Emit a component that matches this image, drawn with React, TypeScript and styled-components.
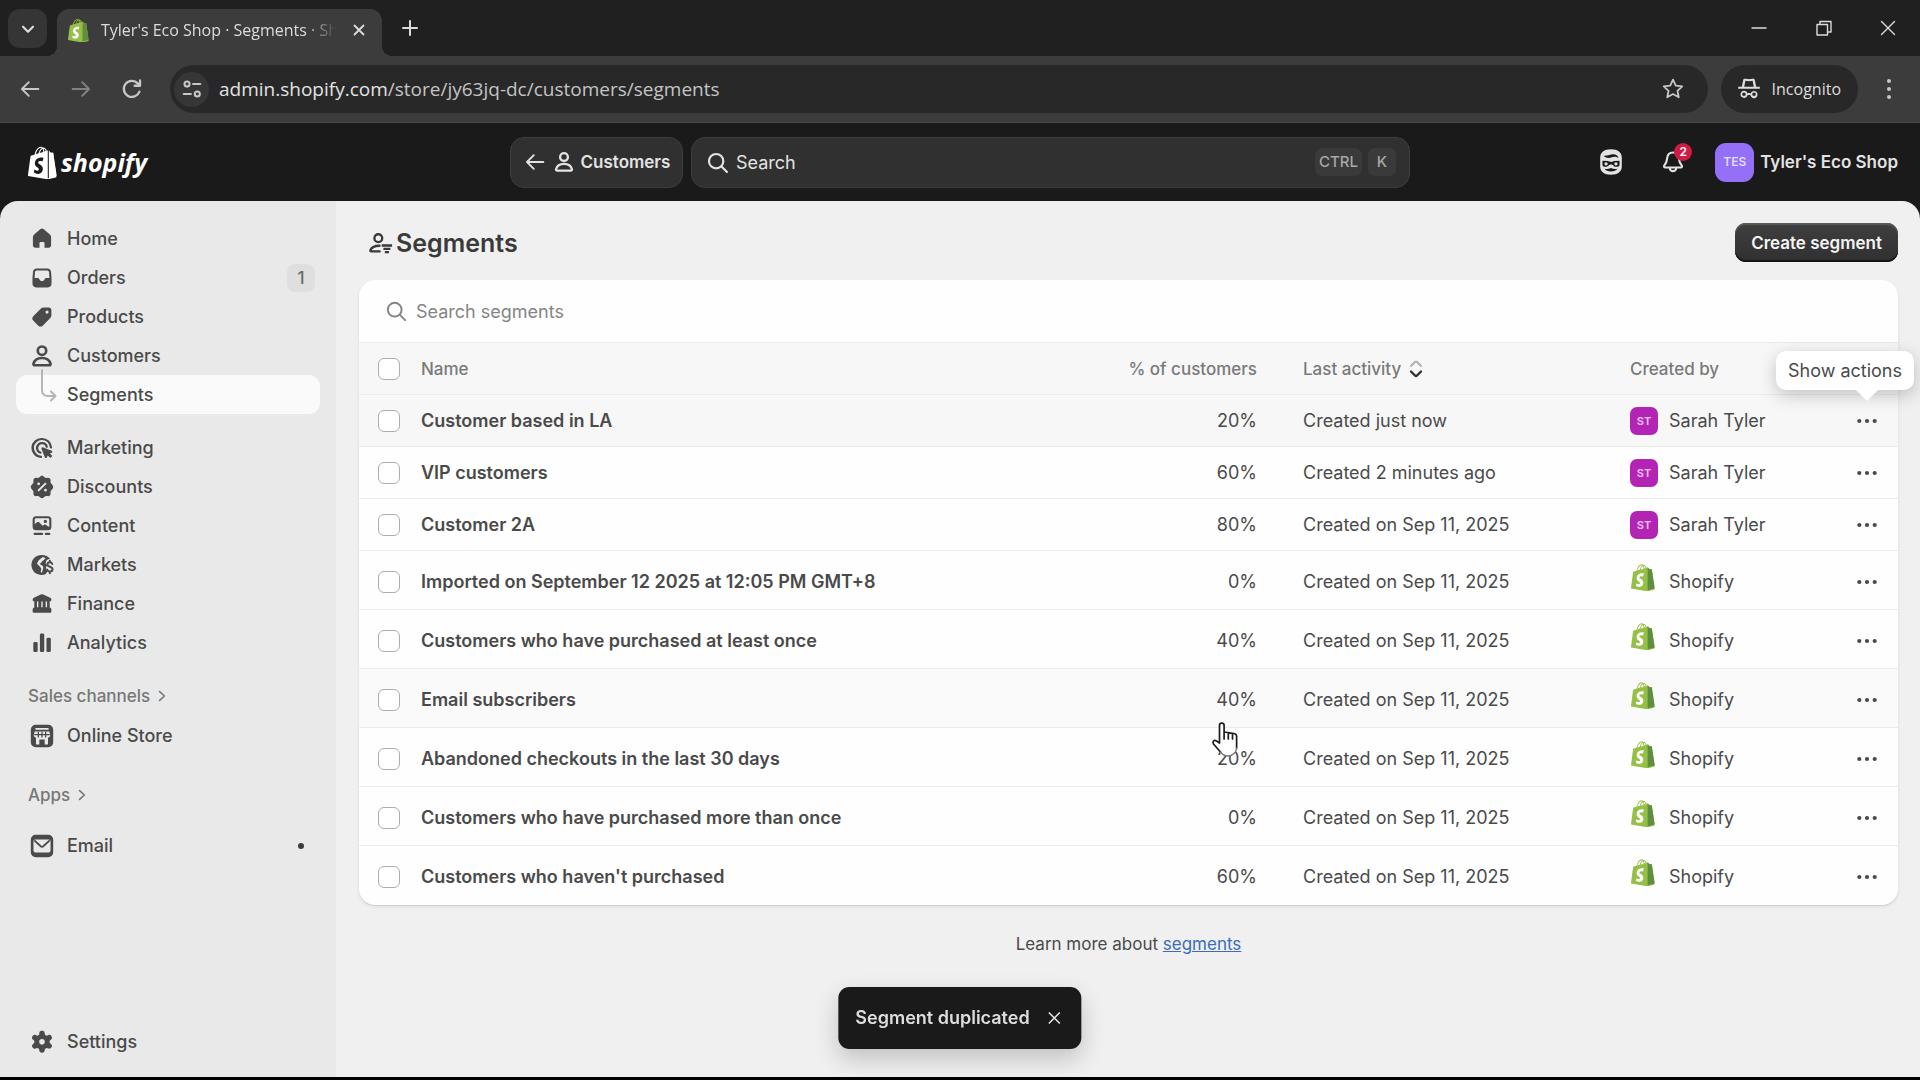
import React from 'react';
import styled, { createGlobalStyle } from 'styled-components';

const Global = createGlobalStyle`
  *, *::before, *::after { box-sizing: border-box; }
  body { margin: 0; background: #000; }
  button, input { font: inherit; color: inherit; }
  button { border: 0; background: none; padding: 0; cursor: pointer; }
  a { color: inherit; text-decoration: none; }
  h1, p, ul { margin: 0; padding: 0; }
  ul { list-style: none; }
  svg { display: block; flex: none; }
`;

const ui = '"Inter", "Liberation Sans", sans-serif';
const chromeFont = '"Open Sans", "Noto Sans", sans-serif';

const Window = styled.div`
  min-height: 100vh;
  display: flex;
  flex-direction: column;
  padding-bottom: 3px;
  background: #000;
  font-family: ${ui};
  font-size: 18px;
  line-height: 24px;
  color: #4a4a4a;
`;

/* Browser chrome */

const TabStrip = styled.div`
  height: 56px;
  display: flex;
  align-items: flex-end;
  background: #202020;
  color: #dcdcdc;
  font-family: ${chromeFont};
`;

const TabMenu = styled.button`
  width: 39px;
  height: 39px;
  margin: 0 10px 8px 8px;
  display: grid;
  place-items: center;
  border-radius: 12px;
  background: #353535;
`;

const Tab = styled.div`
  position: relative;
  width: 325px;
  height: 47px;
  padding: 0 15px 6px 11px;
  display: flex;
  align-items: center;
  border-radius: 12px 12px 0 0;
  background: #3c3c3c;
  &::before, &::after {
    content: "";
    position: absolute;
    bottom: 0;
    width: 10px;
    height: 10px;
  }
  &::before { right: 100%; background: radial-gradient(circle at 0 0, transparent 10px, #3c3c3c 10px); }
  &::after { left: 100%; background: radial-gradient(circle at 100% 0, transparent 10px, #3c3c3c 10px); }
`;

const TabTitle = styled.span`
  flex: 1;
  min-width: 0;
  margin: 0 12px;
  white-space: nowrap;
  font-size: 16px;
  mask-image: linear-gradient(90deg, #000 86%, transparent 99%);
`;

const IconButton = styled.button<{ $w?: number; $dim?: boolean }>`
  width: ${p => p.$w ?? 24}px;
  height: 24px;
  flex: none;
  display: grid;
  place-content: center;
  opacity: ${p => (p.$dim ? 0.5 : 1)};
`;

const NewTab = styled.div`
  padding: 0 0 16px 16px;
`;

const WindowControls = styled.div`
  margin-left: auto;
  display: flex;
  padding-bottom: 16px;
`;

const Toolbar = styled.div`
  height: 67px;
  padding: 0 19px 0 18px;
  display: flex;
  align-items: center;
  background: #3c3c3c;
  color: #c7c7c7;
  border-bottom: 1px solid #484848;
  font-family: ${chromeFont};
`;

const NavButtons = styled.div`
  display: flex;
  gap: 27px;
  margin-right: 26px;
`;

const Omnibox = styled.div`
  flex: 1;
  height: 48px;
  margin-right: 13px;
  padding: 0 23px 0 4px;
  display: flex;
  align-items: center;
  border-radius: 24px;
  background: #282828;
`;

const SiteInfo = styled.span`
  width: 35px;
  height: 35px;
  margin-right: 10px;
  display: grid;
  place-items: center;
  border-radius: 50%;
  background: #363636;
`;

const Address = styled.span`
  flex: 1;
  font-size: 19px;
  color: #c4c4c4;
  b { font-weight: 400; color: #e3e3e3; }
`;

const Incognito = styled.div`
  height: 48px;
  margin-right: 19px;
  padding: 0 17px 0 16px;
  display: flex;
  align-items: center;
  gap: 11px;
  border-radius: 24px;
  background: #282828;
  color: #dedede;
  font-size: 16px;
`;

/* Shopify top bar */

const TopBar = styled.header`
  height: 78px;
  padding: 0 22px;
  display: grid;
  grid-template-columns: 1fr minmax(400px, 900px) 1fr;
  align-items: center;
  background: #1a1a1a;
  color: #e3e3e3;
`;

const Brand = styled.a`
  display: flex;
  align-items: center;
  gap: 4px;
  padding-left: 6px;
  color: #fff;
  font: italic 700 25px/34px ${chromeFont};
`;

const TopCenter = styled.div`
  display: flex;
  gap: 8px;
`;

const ContextButton = styled.button`
  height: 51px;
  width: 173px;
  display: flex;
  align-items: center;
  justify-content: center;
  gap: 4px;
  border: 1px solid #3d3d3d;
  border-radius: 14px;
  background: #303030;
  font-size: 17px;
  font-weight: 600;
`;

const GlobalSearch = styled.label`
  flex: 1;
  height: 51px;
  padding: 0 13px 0 12px;
  display: flex;
  align-items: center;
  border: 1px solid #3d3d3d;
  border-radius: 14px;
  background: #303030;
`;

const BareInput = styled.input`
  flex: 1;
  min-width: 0;
  height: 30px;
  padding: 0;
  margin-left: 5px;
  border: 0;
  outline: 0;
  background: none;
  &::placeholder { color: currentColor; opacity: 1; }
`;

const Key = styled.kbd`
  height: 28px;
  padding: 0 4px;
  min-width: 28px;
  margin-left: 6px;
  display: grid;
  place-items: center;
  border-radius: 7px;
  background: #3a3a3a;
  color: #a8a8a8;
  font: 500 15px/20px ${ui};
`;

const Account = styled.div`
  display: flex;
  align-items: center;
  justify-content: flex-end;
  gap: 36px;
`;

const BellButton = styled.button`
  position: relative;
`;

const Count = styled.span`
  position: absolute;
  left: 15px;
  top: -5px;
  width: 18px;
  height: 18px;
  border-radius: 50%;
  background: #d01c44;
  color: #fff;
  font-size: 12px;
  font-weight: 600;
  line-height: 18px;
  text-align: center;
`;

const StoreButton = styled.button`
  margin-left: -8px;
  display: flex;
  align-items: center;
  gap: 6px;
  font-size: 17px;
  font-weight: 600;
  white-space: nowrap;
`;

const StoreAvatar = styled.span`
  width: 39px;
  height: 39px;
  display: grid;
  place-items: center;
  border-radius: 11px;
  background: #9370f7;
  color: #e4dcff;
  font-size: 12px;
`;

/* Body */

const Frame = styled.div`
  flex: 1;
  display: flex;
  background: linear-gradient(#1a1a1a, #1a1a1a) top / 100% 20px no-repeat;
`;

const Side = styled.nav`
  width: 336px;
  flex: none;
  padding: 18px 16px 16px;
  display: flex;
  flex-direction: column;
  border-radius: 18px 0 0 0;
  background: #e9e9e9;
`;

const Group = styled.ul<{ $before?: number }>`
  margin-top: ${p => p.$before ?? 0}px;
`;

const Item = styled.a<{ $active?: boolean }>`
  position: relative;
  height: 39px;
  padding: 0 5px 0 12px;
  display: flex;
  align-items: center;
  gap: 11px;
  border-radius: 11px;
  background: ${p => (p.$active ? '#fafafa' : 'transparent')};
  color: #4a4a4a;
  font-weight: 500;
`;

const Branch = styled.svg`
  position: absolute;
  left: 22px;
  top: -6px;
`;

const Spacer = styled.span`
  width: 28px;
`;

const Badge = styled.span`
  width: 28px;
  height: 28px;
  margin-left: auto;
  display: grid;
  place-items: center;
  border-radius: 8px;
  background: #dfdfdf;
  color: #6a6a6a;
  font-size: 17px;
`;

const Dot = styled.span`
  width: 6px;
  height: 6px;
  margin: 0 11px 0 auto;
  border-radius: 50%;
  background: #3a3a3a;
`;

const GroupLabel = styled.button<{ $before: number }>`
  height: 40px;
  margin-top: ${p => p.$before}px;
  padding-left: 12px;
  display: flex;
  align-items: center;
  gap: 4px;
  color: #777;
  font-size: 17px;
  font-weight: 500;
`;

const Bottom = styled.div`
  margin-top: auto;
`;

const Main = styled.main`
  flex: 1;
  min-width: 0;
  padding: 22px 22px 0 23px;
  border-radius: 0 18px 0 0;
  background: #f0f0f0;
`;

const PageHead = styled.div`
  height: 39px;
  margin-bottom: 18px;
  padding-left: 8px;
  display: flex;
  align-items: center;
  justify-content: space-between;
`;

const Title = styled.h1`
  display: flex;
  align-items: center;
  gap: 3px;
  font-size: 25px;
  line-height: 32px;
  font-weight: 600;
  color: #3a3a3a;
`;

const Primary = styled.button`
  height: 39px;
  padding: 0 16px;
  border-radius: 11px;
  background: linear-gradient(#3f3f3f, #303030);
  box-shadow: inset 0 2px 1px #5a5a5a, inset 0 -2px 0 #161616;
  color: #f4f4f4;
  font-size: 17px;
  font-weight: 600;
`;

const Card = styled.section`
  border-radius: 16px;
  background: #fefefe;
  box-shadow: 0 1px 1px #cfcfcf, 0 2px 4px rgba(0, 0, 0, 0.06);
`;

const SegmentSearch = styled.label`
  height: 62px;
  padding: 0 24px;
  display: flex;
  align-items: center;
  color: #858585;
  ${BareInput} { margin-left: 7px; }
`;

const Table = styled.table`
  width: 100%;
  table-layout: fixed;
  border-collapse: collapse;
  th, td { padding: 0; text-align: left; white-space: nowrap; }
`;

const HeadRow = styled.tr`
  height: 52px;
  background: #f7f7f7;
  border-top: 1px solid #ebebeb;
  color: #7a7a7a;
  font-size: 17px;
  th { font-weight: 500; }
`;

const Row = styled.tr<{ $tall: boolean; $shade?: string }>`
  height: ${p => (p.$tall ? 59 : 52)}px;
  background: ${p => p.$shade ?? 'transparent'};
  border-top: 1px solid #ebebeb;
  td { padding-top: ${p => (p.$tall ? 3 : 0)}px; }
`;

const Tick = styled.input`
  appearance: none;
  display: block;
  width: 22px;
  height: 22px;
  margin: 0 auto 0 19px;
  border: 1px solid #adadad;
  border-radius: 6px;
  background: #fff;
`;

const NameCell = styled.td`
  font-weight: 600;
`;

const Pad = styled.span<{ $right?: boolean }>`
  padding: 0 23px;
  display: flex;
  align-items: center;
  justify-content: ${p => (p.$right ? 'flex-end' : 'flex-start')};
`;

const SortButton = styled.button`
  display: flex;
  align-items: center;
  gap: 7px;
  font-weight: 500;
`;

const Initials = styled.span`
  width: 28px;
  height: 28px;
  margin-right: 11px;
  display: grid;
  place-items: center;
  border-radius: 7px;
  background: #b424b4;
  color: #f3c4f3;
  font-size: 11px;
  font-weight: 600;
`;

const BagWrap = styled.span`
  width: 28px;
  height: 28px;
  margin: 0 11px 10px 0;
  padding-left: 1px;
`;

const Actions = styled.button`
  position: relative;
  width: 62px;
  height: 36px;
  display: grid;
  place-items: center;
`;

const Tooltip = styled.span`
  position: absolute;
  right: -16px;
  bottom: 49px;
  z-index: 2;
  padding: 0 12px;
  border-radius: 10px;
  background: #fff;
  box-shadow: 0 5px 18px rgba(0, 0, 0, 0.22);
  font-size: 18px;
  line-height: 39px;
  white-space: nowrap;
  &::after {
    content: "";
    position: absolute;
    right: 36px;
    top: 100%;
    border: 11px solid transparent;
    border-top-color: #fff;
    border-bottom: 0;
  }
`;

const LearnMore = styled.p`
  padding: 27px 0;
  text-align: center;
  font-size: 17px;
  a { color: #3c6bc0; text-decoration: underline; }
`;

const Toast = styled.div`
  position: fixed;
  left: 50%;
  bottom: 31px;
  translate: -50% 0;
  height: 62px;
  padding: 0 15px 0 17px;
  display: flex;
  align-items: center;
  gap: 13px;
  border-radius: 11px;
  background: #1a1a1a;
  box-shadow: 0 10px 24px rgba(0, 0, 0, 0.2);
  color: #dedede;
  font-weight: 600;
  white-space: nowrap;
`;

const Pointer = styled.svg`
  position: fixed;
  left: 1211px;
  top: 719px;
`;

/* Icons */

type IconProps = { size?: number; children?: React.ReactNode };

const Solid = ({ size = 28, children }: IconProps) => (
  <svg width={size} height={size} viewBox="0 0 20 20" fill="currentColor" fillRule="evenodd" aria-hidden="true">{children}</svg>
);
const Line = ({ size = 24, w = 1.6, children }: IconProps & { w?: number }) => (
  <svg width={size} height={size} viewBox="0 0 20 20" fill="none" stroke="currentColor" strokeWidth={w} strokeLinecap="round" strokeLinejoin="round" aria-hidden="true">{children}</svg>
);

const BAG = 'M95.6,28.2c-0.1-0.6-0.6-1-1-1c-0.4,0-9.3-0.2-9.3-0.2s-7.4-7.2-8.1-7.9c-0.7-0.7-2.2-0.5-2.7-0.3c0,0-1.4,0.4-3.7,1.1c-0.4-1.3-1-2.8-1.8-4.4c-2.6-5-6.5-7.7-11.1-7.7c-0.3,0-0.6,0-1,0.1c-0.1-0.2-0.3-0.3-0.4-0.5c-2-2.2-4.6-3.2-7.7-3.1c-6,0.2-12,4.5-16.8,12.2c-3.4,5.4-6,12.2-6.8,17.5c-6.9,2.1-11.7,3.6-11.8,3.7c-3.5,1.1-3.6,1.2-4,4.5c-0.3,2.5-9.5,73-9.5,73l75.6,13.1l32.8-8.1C108.4,120.2,95.7,28.8,95.6,28.2z M67.2,21.2c-1.7,0.5-3.7,1.1-5.8,1.8c0-3-0.4-7.3-1.8-10.9C64.1,12.9,66.3,18,67.2,21.2z M57.3,24.3c-4,1.2-8.4,2.6-12.8,3.9c1.2-4.7,3.6-9.4,6.4-12.5c1.1-1.1,2.6-2.4,4.3-3.2C57,16,57.4,20.9,57.3,24.3z M49.1,8.3c1.4,0,2.6,0.3,3.6,0.9c-1.6,0.8-3.2,2.1-4.7,3.6c-3.8,4.1-6.7,10.5-7.9,16.6c-3.6,1.1-7.2,2.2-10.5,3.2C31.7,23.1,39.8,8.6,49.1,8.3z';
const BAG_SIDE = 'M94.6,27.2c-0.4,0-9.3-0.2-9.3-0.2s-7.4-7.2-8.1-7.9c-0.3-0.3-0.6-0.4-1-0.5v104.4l32.8-8.1l-13.4-87C95.5,27.6,95,27.2,94.6,27.2z';
const BAG_MARK = 'M58.9,46.3l-3.9,14.3c0,0-4.2-2-9.2-1.6c-7.3,0.5-7.4,5.1-7.3,6.2c0.4,6.3,17,7.7,17.9,22.4c0.7,11.6-6.1,19.5-16,20.1c-11.8,0.7-18.3-6.3-18.3-6.3l2.5-10.7c0,0,6.6,5,11.9,4.7c3.4-0.2,4.7-3,4.5-5c-0.5-8.2-14-7.7-14.9-21.2c-0.7-11.3,6.7-22.8,23.1-23.8C55.5,44.9,58.9,46.3,58.9,46.3z';

const Bag = ({ w, h, mono }: { w: number; h: number; mono?: boolean }) => (
  <svg width={w} height={h} viewBox="0 0 110 125" aria-hidden="true">
    <path d={BAG} fill={mono ? '#fff' : '#95bf47'} fillRule="evenodd" />
    <path d={BAG_SIDE} fill={mono ? '#fff' : '#5e8e3e'} />
    {mono && <path d="M77 18v106" stroke="#1a1a1a" strokeWidth="4" />}
    <path d={BAG_MARK} fill={mono ? '#1a1a1a' : '#fff'} />
  </svg>
);

const person = <><circle cx="10" cy="6.2" r="3" /><path d="M3.9 15.6c.7-2.8 3-4.2 6.1-4.2s5.4 1.4 6.1 4.2c.1.6-.3 1-.8 1H4.700c-.5 0-.9-.4-.8-1z" /></>;
const magnifier = <><circle cx="9" cy="9" r="5.3" /><path d="M13 13l4 4" /></>;
const cross = <path d="M5 5l10 10M15 5L5 15" />;
const arrowLeft = <path d="M17 10H3.5M9 4.3L3.3 10 9 15.7" />;

const icons = {
  home: <Solid><path d="M8.7 3.1a2 2 0 0 1 2.6 0l4.3 3.7c.6.5.9 1.2.9 2v5.700c0 1-.8 1.800-1.800 1.800h-2.900V13a.9.9 0 0 0-.9-.9H9.100a.9.9 0 0 0-.9.900v3.300H5.300c-1 0-1.800-.8-1.800-1.800V8.800c0-.8.3-1.500.9-2z" /></Solid>,
  orders: <Solid><path d="M6.200 3.200h7.600a2.700 2.700 0 0 1 2.600 2.200l.4 4.300v4.300a2.700 2.700 0 0 1-2.700 2.700H5.900a2.700 2.700 0 0 1-2.700-2.700V9.700l.4-4.300a2.700 2.700 0 0 1 2.600-2.200zM6.300 4.700c-.7 0-1.200.5-1.300 1.100L4.700 10h2.100c.7 0 1.100.4 1.300.9.300.8 1 1.300 1.900 1.300s1.600-.5 1.900-1.300c.2-.5.6-.9 1.300-.9h2.100L15 5.800a1.300 1.300 0 0 0-1.300-1.100z" /></Solid>,
  products: <Solid><path d="M11.200 3.300h3.600c1 0 1.900.8 1.900 1.900v3.600c0 .8-.3 1.500-.8 2l-5.200 5.200a2.500 2.500 0 0 1-3.500 0l-3.300-3.300a2.500 2.500 0 0 1 0-3.500l5.200-5.100c.6-.5 1.300-.8 2.100-.8zM13.600 5.400a1.100 1.100 0 1 0 0 2.200 1.100 1.100 0 0 0 0-2.200z" /></Solid>,
  customers: <Line size={28} w={1.9}>{person}</Line>,
  marketing: <Solid><path d="M10 2.800a7.200 7.200 0 0 1 7.200 6.600.8.8 0 0 1-1.600.2A5.700 5.700 0 1 0 9.300 15.600a.8.8 0 0 1-.1 1.600A7.200 7.200 0 0 1 10 2.800z" /><path d="M10 5.800a4.200 4.200 0 0 1 4.200 3.300.8.8 0 0 1-1.500.4A2.700 2.700 0 1 0 9.300 12.600a.8.8 0 0 1-.4 1.500A4.200 4.200 0 0 1 10 5.800z" /><path d="M10.600 9.500l6.300 2.400c.7.300.7 1.200 0 1.500l-1.300.6 1.800 1.800-1.400 1.400-1.900-1.800-.6 1.300c-.3.600-1.200.6-1.400 0L9.600 10.600c-.2-.7.300-1.300 1-1.100z" /></Solid>,
  discounts: <Solid><path d="M10 2c.8 0 1.300.5 1.800 1 .5.500 1 .6 1.700.5.8-.1 1.500-.2 2.100.4s.6 1.300.5 2.100c-.1.700.1 1.200.6 1.700s1.300 1.400 1.300 2.300-.7 1.700-1.300 2.300c-.5.500-.7 1-.6 1.700.1.800.1 1.500-.5 2.100s-1.300.5-2.100.4c-.7-.1-1.200 0-1.700.5s-1 1-1.800 1-1.300-.5-1.800-1-1-.6-1.700-.5c-.8.1-1.500.2-2.100-.4s-.6-1.300-.5-2.100c.1-.7-.1-1.200-.6-1.700S2 10.900 2 10s.7-1.700 1.300-2.300c.5-.5.7-1 .6-1.700-.1-.8-.1-1.500.5-2.100s1.300-.5 2.100-.4c.7.1 1.200 0 1.700-.5s1-1 1.800-1zM7.600 6.700a1 1 0 1 0 0 2 1 1 0 0 0 0-2zM12.500 11.300a1 1 0 1 0 0 2 1 1 0 0 0 0-2zM12.300 6.700l-5.600 5.600 1 1 5.600-5.600z" /></Solid>,
  content: <Solid><path d="M5.800 3h8.400a2.500 2.500 0 0 1 2.500 2.500v5a2.500 2.500 0 0 1-2.500 2.500H5.800a2.500 2.500 0 0 1-2.500-2.500v-5A2.500 2.500 0 0 1 5.800 3zm0 1.500c-.6 0-1 .4-1 1v3.300L6.400 7.400c.5-.4 1.100-.4 1.500 0l2.600 2.500.8-.7c.5-.4 1-.4 1.500 0l2.400 1.500V5.500c0-.6-.4-1-1-1zM12.400 5.500a1.200 1.200 0 1 1 0 2.400 1.200 1.200 0 0 1 0-2.400z" /><rect x="4" y="14.800" width="6.800" height="1.600" rx=".7" /><rect x="12" y="14.800" width="4" height="1.600" rx=".7" /></Solid>,
  markets: <Solid><path d="M10 2.800c2.400 0 4.500 1.100 5.800 2.900-1.700-.1-3.100 1-3.100 2.600 0 1 .4 1.500 1 2-.4.300-.9 1-.9 1.700 0 1 .4 1.800 1.200 2.300-.4 1-.9 1.700-1.500 2.300A7.200 7.200 0 1 1 10 2.800zM10.500 4.200L7.700 6.600c-.7.700-.4 1.600-1.400 2.300l2.600 2.700c.9.900.6 1.900.1 3l.9 1.200.9-3.100c.3-1.200 0-1.600-.7-2.300L8.300 9.200c1-.3 1.300-1.200 2-2 .7-.7 1.700-.9 2.200-2.200a6 6 0 0 0-2-.8z" /><path d="M17.300 9.300c-.3-.9-1-1.200-1.700-1.200-1 0-1.700.6-1.700 1.500 0 2.100 3.600 1.200 3.600 3.400 0 1-.8 1.600-1.900 1.600-1 0-1.700-.5-1.900-1.400M15.600 7v1M15.600 14.600v1.300" fill="none" stroke="currentColor" strokeWidth="1.400" strokeLinecap="round" /></Solid>,
  finance: <Solid><path d="M9.100 3.200a2 2 0 0 1 1.800 0l4.900 2.400c.6.300.9.800.9 1.400 0 .7-.5 1.200-1.200 1.200v4.300c.7.200 1.200.8 1.200 1.500v1.300c0 .6-.4 1-1 1H4.300a1 1 0 0 1-1-1V14c0-.7.5-1.300 1.200-1.500V8.200c-.7 0-1.200-.5-1.200-1.200 0-.6.3-1.100.9-1.400zM6.400 8.300v4.100h1V8.300zM9.500 8.300v4.100h1V8.300zM12.600 8.300v4.100h1V8.300z" /></Solid>,
  analytics: <Solid><rect x="3.800" y="9.300" width="3.100" height="7.200" rx="1" /><rect x="8.500" y="3.300" width="3.100" height="13.200" rx="1" /><rect x="13.200" y="6.300" width="3.100" height="10.200" rx="1" /></Solid>,
  store: <Solid><path d="M5.500 2h9A3.500 3.500 0 0 1 18 5.500v9a3.500 3.500 0 0 1-3.500 3.500h-9A3.500 3.500 0 0 1 2 14.500v-9A3.500 3.500 0 0 1 5.500 2zM5.300 4.200v1.300h9.400V4.200zM4.800 6.800l-.7 2.500c0 1 .7 1.700 1.600 1.900V16h2.400v-3.500h3.800V16h2.400v-4.800c.9-.2 1.600-.9 1.600-1.900l-.7-2.500z" /><path d="M4.500 9h11M7.400 7v4M10 7v4M12.600 7v4" stroke="currentColor" strokeWidth=".9" /></Solid>,
  email: <Solid><path d="M5.500 2h9A3.500 3.500 0 0 1 18 5.500v9a3.500 3.500 0 0 1-3.500 3.500h-9A3.500 3.500 0 0 1 2 14.500v-9A3.500 3.500 0 0 1 5.500 2zM5.200 5.400c-.8 0-1.300.5-1.300 1.300v6.600c0 .8.5 1.300 1.300 1.300h9.600c.8 0 1.300-.5 1.300-1.300V6.700c0-.8-.5-1.300-1.300-1.300z" /><path d="M4.500 6l4.600 4.200c.5.500 1.300.5 1.800 0L15.500 6" fill="none" stroke="currentColor" strokeWidth="1.300" /></Solid>,
  settings: <Solid><g transform="translate(-1.700 -1.100) scale(1.170)"><path d="M8.400 3.800c.1-.8.7-1.200 1.600-1.200s1.500.4 1.600 1.200l.2 1.200 1 .6 1.100-.4c.8-.3 1.400 0 1.900.8s.4 1.400-.2 1.900l-.9.800v1.300l.9.800c.6.500.7 1.200.2 1.900s-1.100 1.100-1.900.8l-1.100-.4-1 .6-.2 1.200c-.1.800-.7 1.200-1.600 1.200s-1.500-.4-1.600-1.200l-.2-1.200-1-.6-1.100.4c-.8.300-1.400 0-1.900-.8s-.4-1.400.2-1.900l.9-.8V8.700l-.9-.8c-.6-.5-.7-1.200-.2-1.900s1.100-1.100 1.900-.8l1.100.4 1-.6zM10 7.700a1.700 1.700 0 1 0 0 3.400 1.700 1.700 0 0 0 0-3.400z" /></g></Solid>,
};

const chevron = <Line size={16} w={2}><path d="M7 4.500l6 5.500-6 5.500" /></Line>;

/* Data */

const mainNav: [keyof typeof icons, string][] = [['home', 'Home'], ['orders', 'Orders'], ['products', 'Products'], ['customers', 'Customers']];
const growthNav: [keyof typeof icons, string][] = [['marketing', 'Marketing'], ['discounts', 'Discounts'], ['content', 'Content'], ['markets', 'Markets'], ['finance', 'Finance'], ['analytics', 'Analytics']];

const segments = [
  { name: 'Customer based in LA', pct: '20%', activity: 'Created just now', by: 'Sarah Tyler', shade: '#f7f7f7', tip: true },
  { name: 'VIP customers', pct: '60%', activity: 'Created 2 minutes ago', by: 'Sarah Tyler' },
  { name: 'Customer 2A', pct: '80%', activity: 'Created on Sep 11, 2025', by: 'Sarah Tyler' },
  { name: 'Imported on September 12 2025 at 12:05 PM GMT+8', pct: '0%', activity: 'Created on Sep 11, 2025', by: 'Shopify' },
  { name: 'Customers who have purchased at least once', pct: '40%', activity: 'Created on Sep 11, 2025', by: 'Shopify' },
  { name: 'Email subscribers', pct: '40%', activity: 'Created on Sep 11, 2025', by: 'Shopify', shade: '#fafafa' },
  { name: 'Abandoned checkouts in the last 30 days', pct: '20%', activity: 'Created on Sep 11, 2025', by: 'Shopify' },
  { name: 'Customers who have purchased more than once', pct: '0%', activity: 'Created on Sep 11, 2025', by: 'Shopify' },
  { name: "Customers who haven't purchased", pct: '60%', activity: 'Created on Sep 11, 2025', by: 'Shopify' },
];

const BrowserChrome = () => (
  <>
    <TabStrip>
      <TabMenu aria-label="Search tabs"><Line size={18} w={2.4}><path d="M4.500 7.500L10 13l5.500-5.500" /></Line></TabMenu>
      <Tab>
        <Bag w={21} h={24} />
        <TabTitle>Tyler's Eco Shop · Segments · Sh</TabTitle>
        <IconButton $w={16} aria-label="Close tab"><Line size={18} w={2}>{cross}</Line></IconButton>
      </Tab>
      <NewTab><IconButton aria-label="New tab"><Line size={20} w={2}><path d="M10 3v14M3 10h14" /></Line></IconButton></NewTab>
      <WindowControls>
        <IconButton $w={65} aria-label="Minimize"><Line size={20} w={1.4}><path d="M3 10h14" /></Line></IconButton>
        <IconButton $w={65} aria-label="Restore"><Line size={20} w={1.4}><path d="M3 6.500h10.500V17H3zM6 6V3.500h11V14h-3" /></Line></IconButton>
        <IconButton $w={64} aria-label="Close window"><Line size={20} w={1.4}><path d="M3.500 3.500l13 13M16.500 3.500l-13 13" /></Line></IconButton>
      </WindowControls>
    </TabStrip>
    <Toolbar>
      <NavButtons>
        <IconButton aria-label="Back"><Line>{arrowLeft}</Line></IconButton>
        <IconButton $dim aria-label="Forward"><Line><path d="M3 10h13.500M11 4.300l5.700 5.700-5.700 5.700" /></Line></IconButton>
        <IconButton aria-label="Reload"><Line w={1.9}><path d="M16.200 12.200A6.700 6.700 0 1 1 14.800 5.300L16.500 7M16.700 2.800V7.300H12.200" /></Line></IconButton>
      </NavButtons>
      <Omnibox>
        <SiteInfo><Line size={22} w={1.9}><circle cx="5.500" cy="5.500" r="2.300" /><path d="M11 5.500h6.500M2.500 14.500H9" /><circle cx="14.800" cy="14.500" r="2.300" /></Line></SiteInfo>
        <Address><b>admin.shopify.com</b>/store/jy63jq-dc/customers/segments</Address>
        <IconButton aria-label="Bookmark this tab"><Line w={1.5}><path d="M10 2.200l2.300 5 5.400.6-4 3.700 1.100 5.400L10 14.200l-4.800 2.700 1.100-5.400-4-3.700 5.400-.6z" /></Line></IconButton>
      </Omnibox>
      <Incognito>
        <Solid size={24}><path d="M6.200 1.500h1.500c.8.400 3.800.4 4.600 0h1.500c.5 0 .9.400 1 .9L16 8.200h3v1.600H1V8.200h3l1.200-5.800c.1-.5.500-.9 1-.9zM7 3.200l-1 5h8l-1-5c-1.600.5-4.400.5-6 0z" /><path d="M5.800 11.400a3 3 0 0 1 2.900 2.300c.8-.4 1.800-.4 2.600 0a3 3 0 1 1-.1 1.600c-.7-.5-1.700-.5-2.400 0a3 3 0 1 1-3-3.900zM5.800 12.900a1.500 1.500 0 1 0 0 3 1.500 1.500 0 0 0 0-3zM14.200 12.900a1.500 1.500 0 1 0 0 3 1.500 1.500 0 0 0 0-3z" /></Solid>
        Incognito
      </Incognito>
      <IconButton aria-label="Browser menu"><Solid size={24}><circle cx="10" cy="3.300" r="1.700" /><circle cx="10" cy="10" r="1.700" /><circle cx="10" cy="16.700" r="1.700" /></Solid></IconButton>
    </Toolbar>
  </>
);

const NavItem = ({ icon, label, children }: { icon: keyof typeof icons; label: string; children?: React.ReactNode }) => (
  <li><Item href="#">{icons[icon]}{label}{children}</Item></li>
);

export default function App() {
  return (
    <Window>
      <Global />
      <BrowserChrome />
      <TopBar>
        <Brand href="#"><Bag w={29} h={34} mono />shopify</Brand>
        <TopCenter>
          <ContextButton>
            <Line size={24} w={1.5}>{arrowLeft}</Line>
            <Line size={26} w={1.8}>{person}</Line>
            Customers
          </ContextButton>
          <GlobalSearch>
            <Line size={27}>{magnifier}</Line>
            <BareInput placeholder="Search" aria-label="Search" />
            <Key>CTRL</Key><Key>K</Key>
          </GlobalSearch>
        </TopCenter>
        <Account>
          <IconButton aria-label="Sidekick">
            <Solid size={30}><path d="M10 1.500c4.600 0 7.200 2.200 7.200 5.500v6c0 3.300-2.600 5.500-7.200 5.500S2.800 16.300 2.800 13V7c0-3.300 2.600-5.500 7.200-5.500zM5 5.800c1.500 1.500 3.600 1.800 5.500 1.100 1.600-.6 3-.5 4.500.6-.4-2-2.200-3-4.300-2.600-1.900.4-3.900 1.200-5.700.9zM4.300 9.200v2.700c0 .7.5 1.200 1.200 1.200h1.600c.7 0 1-.3 1.300-.8.6-.9 2.600-.9 3.200 0 .3.500.6.8 1.300.8h1.600c.7 0 1.200-.5 1.200-1.200V9.200l-3.900.2c-.6.800-3 .8-3.600 0zM5.500 14.300c1.600 2.700 7.400 2.700 9 0-1.300.7-2.900.4-4.500-.3-1.600.7-3.200 1-4.500.3z" /><circle cx="6.700" cy="11.200" r="1.100" /><circle cx="13.300" cy="11.200" r="1.100" /></Solid>
          </IconButton>
          <BellButton aria-label="Notifications, 2 unread">
            <Line size={28} w={1.5}><path d="M10 3.200c-2.500 0-4 1.800-4.200 4.200-.2 2.600-.8 3.600-2 5-.5.700-.2 1.500.7 1.500h11c.9 0 1.200-.8.7-1.500-1.200-1.400-1.800-2.400-2-5C14 5 12.500 3.200 10 3.200zM7.700 14.200a2.300 2.300 0 0 0 4.600 0" /></Line>
            <Count>2</Count>
          </BellButton>
          <StoreButton><StoreAvatar>TES</StoreAvatar>Tyler's Eco Shop</StoreButton>
        </Account>
      </TopBar>
      <Frame>
        <Side aria-label="Main">
          <Group>
            {mainNav.map(([icon, label]) => (
              <NavItem key={label} icon={icon} label={label}>{label === 'Orders' && <Badge>1</Badge>}</NavItem>
            ))}
            <li>
              <Item href="#" $active>
                <Branch width="20" height="34" viewBox="0 0 20 34" fill="none" stroke="#b5b5b5" strokeWidth="2" strokeLinecap="round" strokeLinejoin="round"><path d="M4 1v20q0 6 6 6h7M13 22.500l4.500 4.500-4.500 4.500" /></Branch>
                <Spacer />Segments
              </Item>
            </li>
          </Group>
          <Group $before={14}>
            {growthNav.map(([icon, label]) => <NavItem key={label} icon={icon} label={label} />)}
          </Group>
          <GroupLabel $before={14}>Sales channels {chevron}</GroupLabel>
          <Group><NavItem icon="store" label="Online Store" /></Group>
          <GroupLabel $before={20}>Apps {chevron}</GroupLabel>
          <Group $before={11}><NavItem icon="email" label="Email"><Dot /></NavItem></Group>
          <Bottom><Item href="#">{icons.settings}Settings</Item></Bottom>
        </Side>
        <Main>
          <PageHead>
            <Title>
              <Solid size={26}><path d="M8.700 3.300a3 3 0 1 1 0 6 3 3 0 0 1 0-6zM9.600 12.100c-4 0-6.300 1.300-7 3.600-.1.500.1.800.6.800h6.500" fill="none" stroke="currentColor" strokeWidth="1.800" strokeLinecap="round" /><path d="M11.300 11h8v1.900h-8zM12.600 13.600h5.400v1.800h-5.400zM13.700 16.100h3.200v1.700h-3.200z" /></Solid>
              Segments
            </Title>
            <Primary>Create segment</Primary>
          </PageHead>
          <Card>
            <SegmentSearch>
              <Line size={26} w={1.5}>{magnifier}</Line>
              <BareInput placeholder="Search segments" aria-label="Search segments" />
            </SegmentSearch>
            <Table>
              <colgroup><col width="62" /><col /><col width="200" /><col width="327" /><col width="229" /><col width="62" /></colgroup>
              <thead>
                <HeadRow>
                  <th><Tick type="checkbox" aria-label="Select all segments" /></th>
                  <th>Name</th>
                  <th><Pad $right>% of customers</Pad></th>
                  <th><Pad><SortButton>Last activity
                    <svg width="16" height="20" viewBox="0 0 16 20" fill="none" strokeWidth="2" strokeLinecap="round" strokeLinejoin="round"><path d="M3 7l4-4q1-1 2 0l4 4" stroke="#b0b0b0" /><path d="M3 12.500l4 4q1 1 2 0l4-4" stroke="#303030" strokeWidth="2.400" /></svg>
                  </SortButton></Pad></th>
                  <th><Pad>Created by</Pad></th>
                  <th aria-label="Actions" />
                </HeadRow>
              </thead>
              <tbody>
                {segments.map(s => (
                  <Row key={s.name} $tall={s.by === 'Shopify'} $shade={s.shade}>
                    <td><Tick type="checkbox" aria-label={`Select ${s.name}`} /></td>
                    <NameCell>{s.name}</NameCell>
                    <td><Pad $right>{s.pct}</Pad></td>
                    <td><Pad>{s.activity}</Pad></td>
                    <td>
                      <Pad>
                        {s.by === 'Shopify' ? <BagWrap><Bag w={24} h={28} /></BagWrap> : <Initials>ST</Initials>}
                        {s.by}
                      </Pad>
                    </td>
                    <td>
                      <Actions aria-label="Show actions">
                        <Solid size={28}><circle cx="4.500" cy="10" r="1.500" /><circle cx="10" cy="10" r="1.500" /><circle cx="15.500" cy="10" r="1.500" /></Solid>
                        {s.tip && <Tooltip role="tooltip">Show actions</Tooltip>}
                      </Actions>
                    </td>
                  </Row>
                ))}
              </tbody>
            </Table>
          </Card>
          <LearnMore>Learn more about <a href="#">segments</a></LearnMore>
        </Main>
      </Frame>
      <Toast role="status">
        Segment duplicated
        <IconButton aria-label="Dismiss"><Line size={20} w={1.7}>{cross}</Line></IconButton>
      </Toast>
      <Pointer width="28" height="40" viewBox="0 0 28 40" fill="none" stroke="#1c1c1c" strokeWidth="1.700" strokeLinejoin="round" strokeLinecap="round">
        <path d="M8.500 24V6.500a2.300 2.300 0 0 1 4.600 0V13l10 1.500q2.500.5 2.500 3V28c0 5-3.500 9-8.500 9-4.500 0-6.500-2-8.500-5.500L2.500 25c-1.500-2.500.5-4.500 3-3z" fill="#fff" stroke="none" />
        <path d="M9.500 33L2.500 25c-1.500-2.500.5-4.500 3-3L8.500 24V6.500a2.300 2.300 0 0 1 4.600 0V20M13.100 13l10 1.500q2.500.5 2.500 3V29M17.300 14v6M21.500 14.500V20" />
        <path d="M25.600 29c0 4-4 8-8.600 8-3.500 0-6-2-7.500-4" stroke="#777" strokeWidth="1.400" />
      </Pointer>
    </Window>
  );
}
